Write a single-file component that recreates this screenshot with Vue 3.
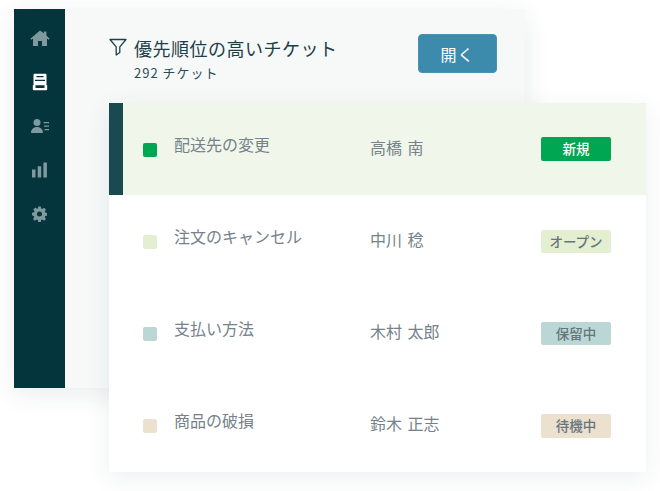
<script setup>
const tickets = [
  { title: '配送先の変更', name: '高橋 南', status: '新規', kind: 'new', active: true },
  { title: '注文のキャンセル', name: '中川 稔', status: 'オープン', kind: 'open' },
  { title: '支払い方法', name: '木村 太郎', status: '保留中', kind: 'hold' },
  { title: '商品の破損', name: '鈴木 正志', status: '待機中', kind: 'wait' },
]
</script>

<template>
  <div class="stage">
    <div class="back">
      <nav class="side">
        <svg class="ico" viewBox="0 0 20 18" width="20" height="18"><path fill="#7f9a9e" d="M10 1.500 0.300 9.700l1 1.100L3 9.500V17h5v-5h4v5h5V9.500l1.700 1.300 1-1.100L16.400 6.500V2.500h-2.600v1.800z"/></svg>
        <svg class="ico" viewBox="0 0 16 18" width="16" height="18"><path fill="#fff" fill-rule="evenodd" d="M2.500.8h11a1 1 0 0 1 1 1v10.400h-13V1.800a1 1 0 0 1 1-1zM4.500 3v1.300h7V3zM3 6.800v1.300h10V6.800zM.8 12.200h2.700v2.800h9v-2.800h2.700v4a1 1 0 0 1-1 1H1.800a1 1 0 0 1-1-1z"/></svg>
        <svg class="ico" viewBox="0 0 18 15" width="18" height="15"><circle cx="6" cy="4" r="3.500" fill="#7f9a9e"/><path fill="#7f9a9e" d="M0 14.500c0-3.600 2.400-6 6-6s6 2.400 6 6zM12.500 3.500H18v1.300h-5.500zM13 7h5v1.300h-5zM13.500 10.500H18v1.300h-4.500z"/></svg>
        <svg class="ico" viewBox="0 0 15 15" width="15" height="15"><path fill="#7f9a9e" d="M0 7h3.500v8H0zM5.700 3.800h3.500V15H5.700zM11.400 0h3.500v15h-3.500z"/></svg>
        <svg class="ico" viewBox="0 0 16 16" width="15" height="15"><path fill="#7f9a9e" fill-rule="evenodd" d="M6.600 0h2.800l.4 2.200 1.200.5 1.900-1.300 2 2-1.300 1.900.5 1.200 2.200.4v2.800l-2.200.4-.5 1.200 1.300 1.900-2 2-1.900-1.300-1.200.5-.4 2.200H6.600l-.4-2.200-1.200-.5-1.900 1.300-2-2 1.300-1.900-.5-1.200L0 9.400V6.600l2.200-.4.500-1.200-1.300-1.900 2-2L5.300 2.400l1-.4zM8 5.300a2.700 2.700 0 1 0 0 5.400 2.700 2.700 0 0 0 0-5.400z"/></svg>
      </nav>
      <div class="main">
        <header class="head">
          <svg class="filter" viewBox="0 0 18 18" width="18" height="18"><path fill="none" stroke="#1c4048" stroke-width="1.300" stroke-linejoin="round" d="M1 1.500h16l-6.200 7.300v5.700l-3.600 2.500V8.800z"/></svg>
          <div class="titles">
            <h1>優先順位の高いチケット</h1>
            <p>292 チケット</p>
          </div>
          <button class="open-btn">開く</button>
        </header>
      </div>
    </div>

    <div class="front">
      <div v-for="t in tickets" :key="t.title" class="row" :class="{ active: t.active }">
        <span class="dot" :class="t.kind"></span>
        <span class="title">{{ t.title }}</span>
        <span class="name">{{ t.name }}</span>
        <span class="badge" :class="t.kind">{{ t.status }}</span>
      </div>
    </div>
  </div>
</template>

<style>
html, body { margin: 0; background: #fff; }
</style>

<style scoped>
.stage {
  position: relative;
  width: 660px;
  height: 491px;
  overflow: hidden;
  font-family: "Noto Sans CJK JP", "Noto Sans", sans-serif;
}
.back {
  position: absolute;
  left: 14px;
  top: 9px;
  width: 511px;
  height: 379px;
  display: flex;
  background: #f7f9f9;
  box-shadow: 0 6px 24px rgba(20, 50, 60, 0.09);
}
.side {
  width: 51px;
  flex: none;
  background: #04343c;
  display: flex;
  flex-direction: column;
  align-items: center;
  padding-top: 20px;
  box-sizing: border-box;
}
.ico { display: block; height: 18px; margin-bottom: 26px; }
.main { flex: 1; }
.head {
  display: flex;
  align-items: flex-start;
  padding: 25px 28px 0 44px;
}
.filter { margin-top: 4px; margin-right: 7px; flex: none; }
.titles { flex: 1; }
h1 {
  margin: 0;
  font-size: 18px;
  font-weight: 400;
  line-height: 28px;
  color: #1c4048;
  letter-spacing: 0.5px;
}
p {
  margin: 2px 0 0;
  font-size: 13px;
  line-height: 18px;
  color: #2a4d55;
  letter-spacing: 1px;
}
.open-btn {
  width: 79px;
  height: 39px;
  border: 1px solid #4a92b0;
  border-radius: 4px;
  background: #3c8bad;
  color: #fff;
  font: 400 16px "Noto Sans CJK JP", sans-serif;
  letter-spacing: 1px;
  padding: 0;
}
.front {
  position: absolute;
  left: 109px;
  top: 103px;
  width: 537px;
  height: 369px;
  background: #fff;
  display: grid;
  grid-template-rows: repeat(4, 1fr);
  box-shadow: 0 6px 24px rgba(20, 50, 60, 0.08);
}
.row {
  display: flex;
  align-items: center;
  padding-left: 34px;
}
.row.active {
  background: #f1f6ea;
  box-shadow: inset 14px 0 0 #194a50;
}
.dot {
  width: 14px;
  height: 14px;
  border-radius: 2px;
  flex: none;
  margin-top: 1px;
}
.title {
  width: 196px;
  margin-left: 17px;
  font-size: 16px;
  line-height: 20px;
  margin-top: -11px;
  color: #75828a;
}
.name {
  width: 171px;
  font-size: 16px;
  line-height: 20px;
  margin-top: -5px;
  color: #75828a;
  word-spacing: 2px;
}
.badge {
  width: 70px;
  height: 23.500px;
  line-height: 23px;
  border-radius: 2px;
  text-align: center;
  font-size: 13.500px;
  font-weight: 500;
  color: #66757c;
}
.badge.new, .dot.new { background: #00a651; color: #fff; }
.badge.open, .dot.open { background: #e3efd0; }
.badge.hold, .dot.hold { background: #bad7d5; }
.badge.wait, .dot.wait { background: #ece0cf; }
</style>
